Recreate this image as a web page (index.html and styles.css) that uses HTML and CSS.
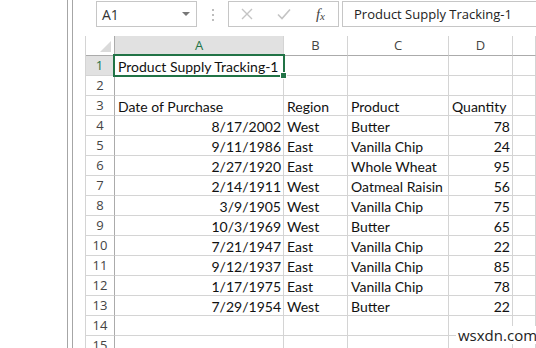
FILE: index.html
```html
<!DOCTYPE html>
<html lang="en">
<head>
  <meta charset="UTF-8">
  <title>Product Supply Tracking</title>
  <link rel="stylesheet" href="styles.css">
</head>
<body>

<div class="window">
  <div class="inner">

    <div class="toolbar">
      <div class="namebox">
        <span>A1</span>
        <svg class="caret" width="8" height="5" viewBox="0 0 8 5"><path d="M0 0h8L4 4z" fill="#777"/></svg>
      </div>
      <div class="dots"><i></i><i></i><i></i></div>
      <div class="actions">
        <svg width="12" height="12" viewBox="0 0 12 12"><path d="M1 1l10 10M11 1L1 11" stroke="#c4c4c4" stroke-width="1.4"/></svg>
        <svg width="14" height="12" viewBox="0 0 14 12"><path d="M1 6.5l4 4L13 1.5" stroke="#c4c4c4" stroke-width="1.6" fill="none"/></svg>
        <span class="fx">f<sub>x</sub></span>
      </div>
      <div class="formula">Product Supply Tracking-1</div>
    </div>

    <div class="sheet">
      <div class="hd corner"></div>
      <div class="hd col active">A</div>
      <div class="hd col">B</div>
      <div class="hd col">C</div>
      <div class="hd col">D</div>
      <div class="hd col"></div>

      <div class="hd row active">1</div>
      <div class="c sel">Product Supply Tracking-1</div>
      <div class="c"></div><div class="c"></div><div class="c"></div><div class="c"></div>

      <div class="hd row">2</div>
      <div class="c"></div><div class="c"></div><div class="c"></div><div class="c"></div><div class="c"></div>

      <div class="hd row">3</div>
      <div class="c">Date of Purchase</div><div class="c">Region</div><div class="c">Product</div><div class="c">Quantity</div><div class="c"></div>

      <div class="hd row">4</div>
      <div class="c num">8/17/2002</div><div class="c">West</div><div class="c">Butter</div><div class="c num">78</div><div class="c"></div>

      <div class="hd row">5</div>
      <div class="c num">9/11/1986</div><div class="c">East</div><div class="c">Vanilla Chip</div><div class="c num">24</div><div class="c"></div>

      <div class="hd row">6</div>
      <div class="c num">2/27/1920</div><div class="c">East</div><div class="c">Whole Wheat</div><div class="c num">95</div><div class="c"></div>

      <div class="hd row">7</div>
      <div class="c num">2/14/1911</div><div class="c">West</div><div class="c">Oatmeal Raisin</div><div class="c num">56</div><div class="c"></div>

      <div class="hd row">8</div>
      <div class="c num">3/9/1905</div><div class="c">West</div><div class="c">Vanilla Chip</div><div class="c num">75</div><div class="c"></div>

      <div class="hd row">9</div>
      <div class="c num">10/3/1969</div><div class="c">West</div><div class="c">Butter</div><div class="c num">65</div><div class="c"></div>

      <div class="hd row">10</div>
      <div class="c num">7/21/1947</div><div class="c">East</div><div class="c">Vanilla Chip</div><div class="c num">22</div><div class="c"></div>

      <div class="hd row">11</div>
      <div class="c num">9/12/1937</div><div class="c">East</div><div class="c">Vanilla Chip</div><div class="c num">85</div><div class="c"></div>

      <div class="hd row">12</div>
      <div class="c num">1/17/1975</div><div class="c">East</div><div class="c">Vanilla Chip</div><div class="c num">78</div><div class="c"></div>

      <div class="hd row">13</div>
      <div class="c num">7/29/1954</div><div class="c">West</div><div class="c">Butter</div><div class="c num">22</div><div class="c"></div>

      <div class="hd row">14</div>
      <div class="c"></div><div class="c"></div><div class="c"></div><div class="c"></div><div class="c"></div>

      <div class="hd row">15</div>
      <div class="c"></div><div class="c"></div><div class="c"></div><div class="c"></div><div class="c"></div>
    </div>

  </div>
</div>

<div class="watermark">wsxdn.com</div>

</body>
</html>
```

FILE: styles.css
```css
body {
  margin: 0;
  background: #fff;
  font-family: 'Lato', 'Liberation Sans', sans-serif;
  overflow: hidden;
  height: 348px;
}

.window {
  margin-left: 67px;
  border-left: 1px solid #a6a6a6;
  padding-left: 4px;
  height: 348px;
}

.inner {
  border-left: 1px solid #a6a6a6;
  height: 348px;
  padding-left: 13px;
}

/* formula bar */
.toolbar {
  display: flex;
  align-items: flex-start;
  height: 36px;
  padding-top: 1px;
  box-sizing: border-box;
}

.namebox {
  margin-left: 10px;
  width: 101px;
  height: 26px;
  box-sizing: border-box;
  border: 1px solid #c6c6c6;
  display: flex;
  align-items: center;
  justify-content: space-between;
  padding: 0 6px 0 5px;
  font-family: 'Open Sans', sans-serif;
  font-size: 14px;
  color: #333;
}

.dots {
  width: 31px;
  display: flex;
  flex-direction: column;
  align-items: center;
  gap: 3px;
  padding-top: 8px;
}

.dots i {
  width: 2px;
  height: 2px;
  background: #bdbdbd;
}

.actions {
  width: 111px;
  height: 26px;
  box-sizing: border-box;
  border: 1px solid #c6c6c6;
  display: flex;
  align-items: center;
  justify-content: space-between;
  padding: 0 13px 0 12px;
}

.fx {
  font-family: 'Liberation Serif', serif;
  font-style: italic;
  font-size: 15px;
  color: #444;
  line-height: 1;
}

.fx sub {
  font-size: 11px;
  vertical-align: -1px;
}

.formula {
  margin-left: 3px;
  flex: 1;
  height: 26px;
  box-sizing: border-box;
  border: 1px solid #c6c6c6;
  border-right: none;
  padding-left: 11px;
  font-family: 'Open Sans', sans-serif;
  font-size: 13px;
  line-height: 24px;
  color: #222;
  white-space: nowrap;
}

/* grid */
.sheet {
  display: grid;
  grid-template-columns: 29px 169px 64px 101px 64px 1fr;
  grid-auto-rows: 20px;
  border-left: 1px solid #d4d4d4;
  margin-left: -1px;
}

.sheet > div {
  box-sizing: border-box;
  border-right: 1px solid #d4d4d4;
  border-bottom: 1px solid #d4d4d4;
  white-space: nowrap;
}

.hd {
  font-family: 'Open Sans', sans-serif;
  font-size: 13px;
  color: #444;
  text-align: center;
  line-height: 19px;
  background: #fff;
}

.hd.col {
  border-bottom-color: #ababab;
}

.hd.row {
  border-right-color: #ababab;
}

.hd.col.active {
  background: #e1e1e1;
  color: #217346;
  border-bottom: 2px solid #217346;
}

.hd.row.active {
  background: #e1e1e1;
  color: #217346;
  border-right: 2px solid #217346;
}

.corner {
  position: relative;
  border-bottom-color: #ababab !important;
  border-right-color: #ababab !important;
}

.corner::after {
  content: "";
  position: absolute;
  right: 3px;
  bottom: 3px;
  border-style: solid;
  border-width: 0 0 11px 11px;
  border-color: transparent transparent #dadada transparent;
}

.c {
  font-size: 14px;
  line-height: 21px;
  color: #111;
  padding: 0 3px;
  overflow: visible;
}

.c.num {
  text-align: right;
  padding-right: 2px;
}

.sel {
  position: relative;
}

.sel::before {
  content: "";
  position: absolute;
  left: -2px;
  top: -2px;
  right: -2px;
  bottom: -2px;
  border: 2px solid #217346;
}

.sel::after {
  content: "";
  position: absolute;
  right: -4px;
  bottom: -4px;
  width: 5px;
  height: 5px;
  background: #217346;
  border: 1px solid #fff;
}

.watermark {
  position: absolute;
  left: 456px;
  top: 326px;
  font-family: 'Open Sans', sans-serif;
  font-size: 15px;
  color: #222;
  background: #fff;
  padding: 0 2px;
  line-height: 18px;
}
```
